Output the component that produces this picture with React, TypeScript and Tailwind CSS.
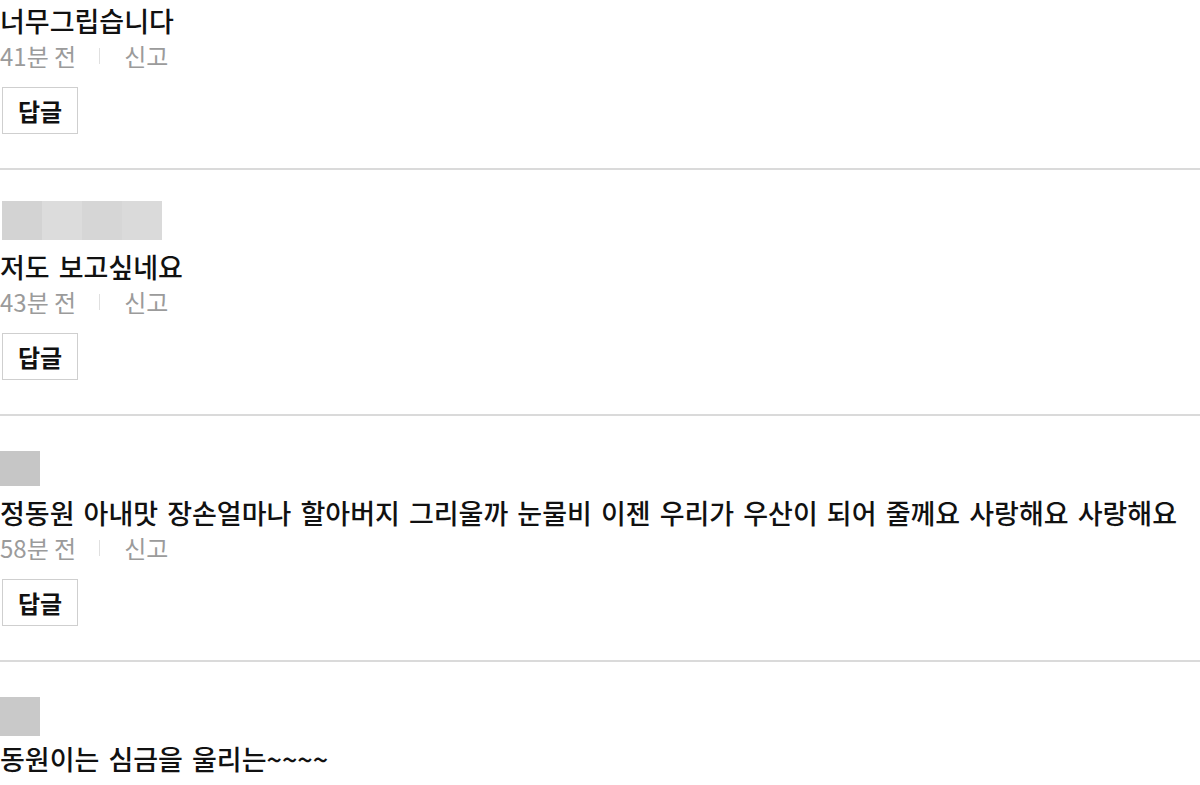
import React from "react";

type Comment = {
  text: string;
  time?: string;
  avatar?: "name" | "square" | "squareShort";
};

const comments: Comment[] = [
  { text: "너무그립습니다", time: "41분 전" },
  { text: "저도 보고싶네요", time: "43분 전", avatar: "name" },
  {
    text: "정동원 아내맛 장손얼마나 할아버지 그리울까 눈물비 이젠 우리가 우산이 되어 줄께요 사랑해요 사랑해요",
    time: "58분 전",
    avatar: "squareShort",
  },
  // last one is cut off by the viewport, only its text is visible
  { text: "동원이는 심금을 울리는~~~~", avatar: "square" },
];

const Avatar = ({ kind }: { kind: Comment["avatar"] }) => {
  if (kind === "name") {
    return (
      <div className="flex h-[39px] pl-[2px]">
        <div className="w-[40px] bg-[#d3d3d3]" />
        <div className="w-[40px] bg-[#dcdcdc]" />
        <div className="w-[40px] bg-[#d6d6d6]" />
        <div className="w-[40px] bg-[#dadada]" />
      </div>
    );
  }
  if (kind === "squareShort") {
    return (
      <div className="h-[39px] pt-[4px]">
        <div className="w-[40px] h-[35px] bg-[#c6c6c6]" />
      </div>
    );
  }
  return (
    <div className="h-[39px] pt-[4px]">
      <div className="w-[40px] h-[39px] bg-[#c9c9c9]" />
    </div>
  );
};

const CommentItem = ({ c, first }: { c: Comment; first: boolean }) => {
  return (
    <div className={first ? "pt-[5px] pb-[34px] border-b-2 border-[#dadada]" : "pt-[31px] pb-[34px] border-b-2 border-[#dadada]"}>
      {c.avatar && <Avatar kind={c.avatar} />}
      <p className={c.avatar ? "mt-[11px] text-[27px] leading-[32px] font-medium text-[#111] whitespace-nowrap [word-spacing:3px]" : "text-[27px] leading-[32px] font-medium text-[#111] whitespace-nowrap [word-spacing:3px]"}>
        {c.text}
      </p>
      {c.time && (
        <>
          <div className="mt-[4px] flex items-center h-[30px] text-[24px] text-[#9b9b9b]">
            <span>{c.time}</span>
            <span className="ml-[23px] mr-[24px] w-px h-[16px] bg-[#e0e0e0]" />
            <span>신고</span>
          </div>
          <button className="mt-[16px] ml-[2px] w-[76px] h-[47px] border border-[#cfcfcf] bg-white text-[24px] font-bold text-[#111]">
            답글
          </button>
        </>
      )}
    </div>
  );
};

export default function App() {
  return (
    <div className="w-[1200px] h-[785px] overflow-hidden bg-white font-['Noto_Sans_CJK_KR',sans-serif]">
      {comments.map((c, i) => (
        <CommentItem key={i} c={c} first={i === 0} />
      ))}
    </div>
  );
}
